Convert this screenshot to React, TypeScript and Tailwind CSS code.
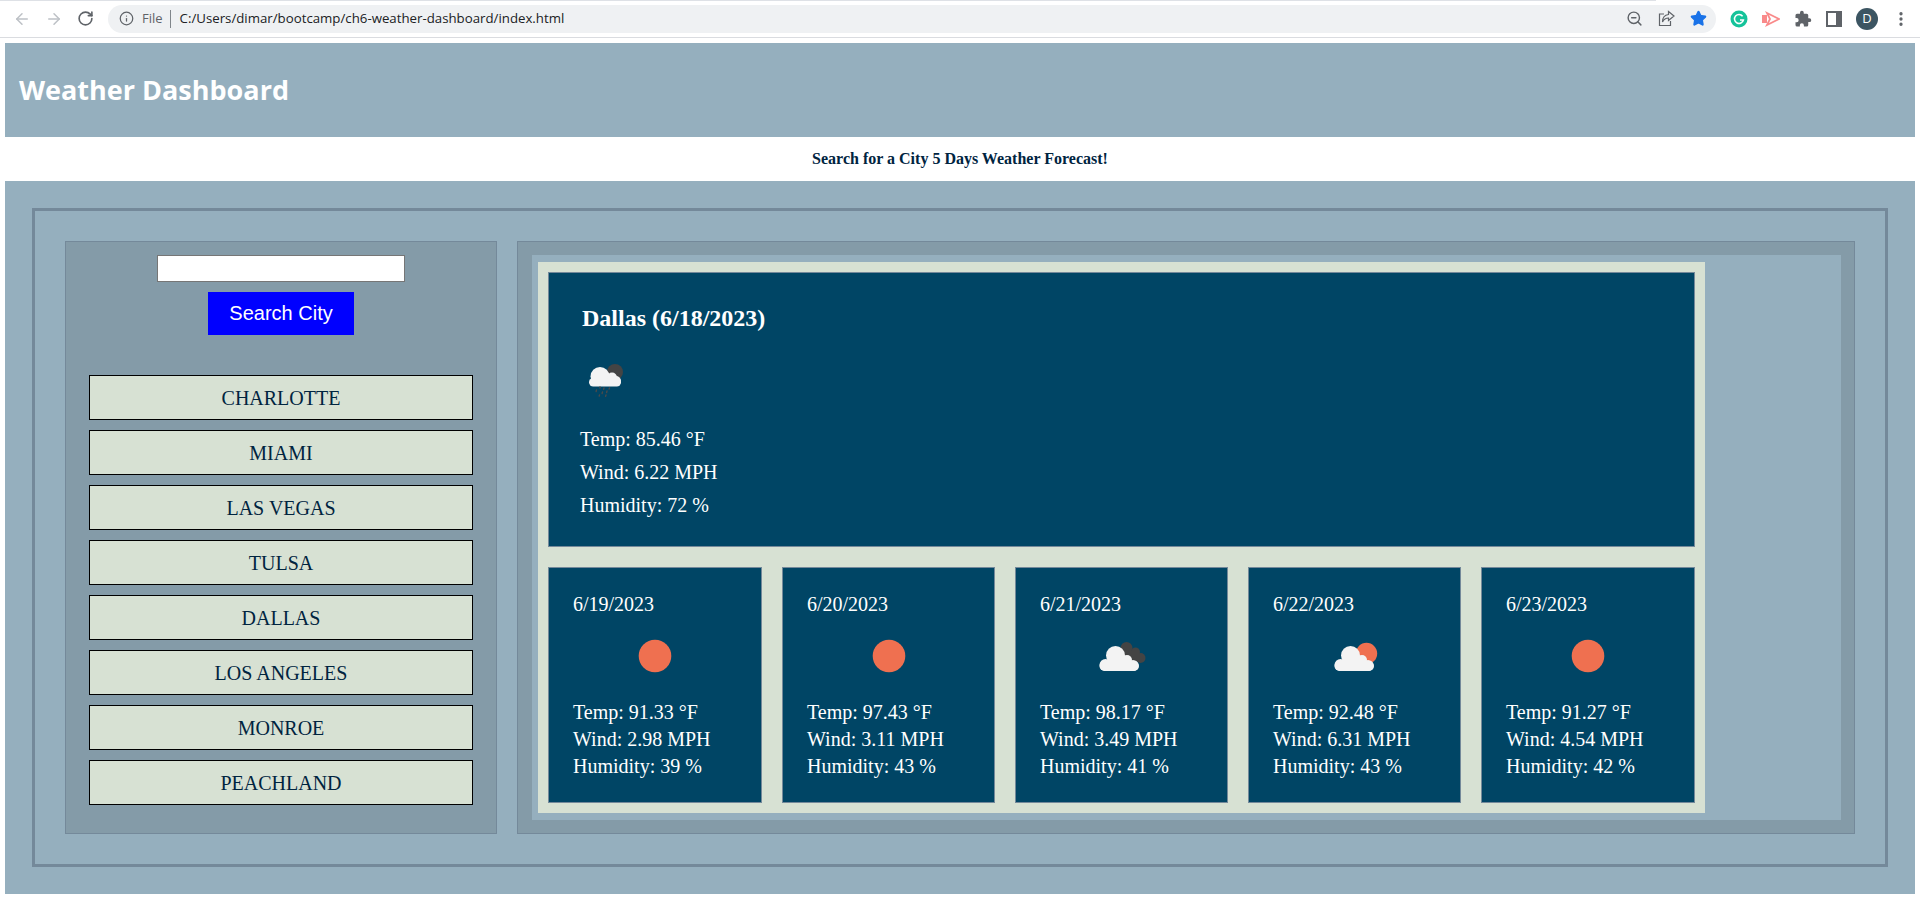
import React from "react";
import { ArrowLeft, ArrowRight, RotateCw, Info, ZoomOut, Star, EllipsisVertical } from "lucide-react";

function Cloud({ dx = 0 }: { dx?: number }) {
  return (
    <g fill="#f3f3f3" transform={`translate(${dx} 0)`}>
      <rect x="2.5" y="30" width="39.5" height="10" rx="5" />
      <circle cx="8.5" cy="34" r="6" />
      <circle cx="18.5" cy="24.5" r="9.5" />
      <circle cx="30" cy="29" r="5" />
      <circle cx="36" cy="34.5" r="5.5" />
    </g>
  );
}

function WeatherIcon({ kind }: { kind: string }) {
  return (
    <svg width="50" height="50" viewBox="0 0 50 50" className="block">
      {kind === "sun" && <circle cx="25" cy="25" r="16.3" fill="#ef7050" />}
      {kind === "clouds" && (
        <>
          <g fill="#444444">
            <circle cx="29.5" cy="17" r="6" />
            <circle cx="38.5" cy="21" r="4.5" />
            <circle cx="43.5" cy="27" r="5" />
            <rect x="26" y="20" width="16" height="10" />
          </g>
          <Cloud />
        </>
      )}
      {kind === "partly" && (
        <>
          <circle cx="36.5" cy="22.5" r="10.7" fill="#ef7050" />
          <Cloud dx={2} />
        </>
      )}
      {kind === "rain" && (
        <>
          <circle cx="35" cy="17" r="8" fill="#444444" />
          <g fill="#f3f3f3">
            <rect x="9" y="23" width="32" height="8.500" rx="4.200" />
            <circle cx="20" cy="21.500" r="9.500" />
            <circle cx="32" cy="22.500" r="5" />
            <circle cx="36" cy="26" r="5" />
          </g>
          <g stroke="#4a4a4a" strokeWidth="1.400" strokeLinecap="round">
            <path d="M20 32v1M24 33l-.4 1.200M29.500 33l-.4 1M16.500 35l-.4 1.500M22.500 37l-.4 1.500M27 36l-.4 1.500M26 40l-.4 1.300M19.500 40l-.3 1" />
          </g>
        </>
      )}
    </svg>
  );
}

const cities = ["CHARLOTTE", "MIAMI", "LAS VEGAS", "TULSA", "DALLAS", "LOS ANGELES", "MONROE", "PEACHLAND"];
const days = [
  { d: "6/19/2023", k: "sun", t: "91.33", w: "2.98", h: "39", cw: "w-[214px]" },
  { d: "6/20/2023", k: "sun", t: "97.43", w: "3.11", h: "43", cw: "w-[213px]" },
  { d: "6/21/2023", k: "clouds", t: "98.17", w: "3.49", h: "41", cw: "w-[213px]" },
  { d: "6/22/2023", k: "partly", t: "92.48", w: "6.31", h: "43", cw: "w-[213px]" },
  { d: "6/23/2023", k: "sun", t: "91.27", w: "4.54", h: "42", cw: "w-[214px]" },
];

function ChromeBar() {
  return (
    <div className="h-[38px] bg-white border-b border-[#dadce0] flex items-center relative font-['Open_Sans',sans-serif]">
      <div className="absolute top-0 left-0 w-[1656px] h-[1px] bg-[#dee1e6]" />
      <div className="w-[108px] flex items-center pl-[13px] gap-[14px] shrink-0">
        <ArrowLeft size={18} color="#bdc1c6" strokeWidth={2} />
        <ArrowRight size={18} color="#bdc1c6" strokeWidth={2} />
        <RotateCw size={17} color="#5f6368" strokeWidth={2.3} />
      </div>
      <div className="w-[1608px] h-[28px] bg-[#eff1f3] rounded-full flex items-center pl-[11px] shrink-0">
        <Info size={15} color="#5f6368" strokeWidth={2} />
        <span className="ml-[8px] text-[13px] text-[#5f6368]">File</span>
        <span className="ml-[7px] w-px h-[18px] bg-[#80868b]" />
        <span className="ml-[9px] text-[13.25px] text-[#202124]">C:/Users/dimar/bootcamp/ch6-weather-dashboard/index.html</span>
        <div className="ml-auto flex items-center gap-[15px] pr-[9px]">
          <ZoomOut size={17} color="#5f6368" strokeWidth={2} />
          <svg width="17" height="17" viewBox="0 0 17 17" fill="none" stroke="#5f6368" strokeWidth="1.200">
            <path d="M6 4H1.500v11.500h11V11" />
            <path d="M10.500 1.500 16 6l-5.500 4.500V8C8 8 6 9 4.500 12c0-4 2-7 6-7.500z" />
          </svg>
          <Star size={17} color="#1a73e8" fill="#1a73e8" strokeWidth={2} />
        </div>
      </div>
      <div className="flex items-center flex-1 pl-[14px] gap-[14px]">
        <svg width="18" height="18" viewBox="0 0 18 18">
          <circle cx="9" cy="9" r="8.500" fill="#15c39a" />
          <path d="M12.600 6.200A4.500 4.500 0 1 0 13.400 10H10" fill="none" stroke="#fff" strokeWidth="1.500" />
        </svg>
        <svg width="18" height="18" viewBox="0 0 18 18">
          <rect x="0" y="5" width="5" height="8" fill="#f98a8a" />
          <path d="M5 3l12 6-12 6 3-6z" fill="none" stroke="#f98a8a" strokeWidth="1.800" />
        </svg>
        <svg width="18" height="18" viewBox="0 0 24 24" fill="#5f6368">
          <path d="M20.500 11H19V7a2 2 0 0 0-2-2h-4V3.500a2.500 2.500 0 0 0-5 0V5H4a2 2 0 0 0-2 2v3.800h1.500a2.700 2.700 0 0 1 0 5.400H2V20a2 2 0 0 0 2 2h3.800v-1.500a2.700 2.700 0 0 1 5.400 0V22H17a2 2 0 0 0 2-2v-4h1.500a2.500 2.500 0 0 0 0-5z" />
        </svg>
        <svg width="16" height="16" viewBox="0 0 16 16">
          <path d="M1 1h14v14H1z" fill="none" stroke="#5f6368" strokeWidth="2" />
          <rect x="10" y="1" width="5" height="14" fill="#5f6368" />
        </svg>
        <div className="w-[22px] h-[22px] rounded-full bg-[#3c5562] text-white text-[13px] flex items-center justify-center">D</div>
        <EllipsisVertical size={18} color="#5f6368" strokeWidth={2.4} />
      </div>
    </div>
  );
}

export default function App() {
  return (
    <div className="h-[897px] overflow-hidden bg-white font-['Liberation_Serif',serif]">
      <ChromeBar />
      <div className="px-[5px] pt-[5px]">
        <header className="h-[94px] bg-[#95afbe] flex items-center pl-[14px]">
          <h1 className="font-['Open_Sans',sans-serif] font-bold text-[27px] text-white">Weather Dashboard</h1>
        </header>
        <p className="h-[44px] flex items-center justify-center font-bold text-[16px] text-[#00243f]">
          Search for a City 5 Days Weather Forecast!
        </p>
        <main className="h-[713px] bg-[#95afbe] p-[27px]">
          <div className="h-[659px] border-[3px] border-[#74899a] p-[30px] flex gap-[20px]">
            <aside className="w-[432px] shrink-0 h-full bg-[#849ba8] border border-[#74899a] pt-[13px] flex flex-col items-center">
              <input className="w-[248px] h-[27px] bg-white border border-[#767676]" />
              <button className="mt-[10px] w-[146px] h-[43px] pb-[2px] bg-[#0000ff] text-white text-[20px] font-['Liberation_Sans',sans-serif]">
                Search City
              </button>
              <div className="mt-[40px] flex flex-col gap-[10px]">
                {cities.map((c) => (
                  <div key={c} className="w-[384px] h-[45px] bg-[#d7e1d3] border border-black flex items-center justify-center text-[20px] text-[#00243f]">
                    {c}
                  </div>
                ))}
              </div>
            </aside>
            <section className="flex-1 h-full bg-[#849ba8] border border-[#74899a] pl-[14px] pr-[13px] py-[13px]">
              <div className="h-full bg-[#95afbe] pl-[6px] pt-[7px]">
                <div className="w-[1167px] h-[551px] bg-[#d7e1d3] p-[10px]">
                  <div className="h-[275px] bg-[#004565] border border-[#74899a] pl-[31px] pt-[31px] text-white text-[20px]">
                    <h2 className="ml-[2px] font-bold text-[24px] leading-[28px]">Dallas (6/18/2023)</h2>
                    <div className="mt-[23px] mb-[18px]"><WeatherIcon kind="rain" /></div>
                    <p className="leading-[33px]">Temp: 85.46 °F</p>
                    <p className="leading-[33px]">Wind: 6.22 MPH</p>
                    <p className="leading-[33px]">Humidity: 72 %</p>
                  </div>
                  <div className="mt-[20px] flex gap-[20px]">
                    {days.map((x) => (
                      <div key={x.d} className={`${x.cw} h-[236px] bg-[#004565] border border-[#74899a] pt-[23px] px-[24px] text-white text-[20px] leading-[27px]`}>
                        <p>{x.d}</p>
                        <div className="mt-[13px] mb-[18px] flex justify-center"><WeatherIcon kind={x.k} /></div>
                        <p>Temp: {x.t} °F</p>
                        <p>Wind: {x.w} MPH</p>
                        <p>Humidity: {x.h} %</p>
                      </div>
                    ))}
                  </div>
                </div>
              </div>
            </section>
          </div>
        </main>
      </div>
    </div>
  );
}
